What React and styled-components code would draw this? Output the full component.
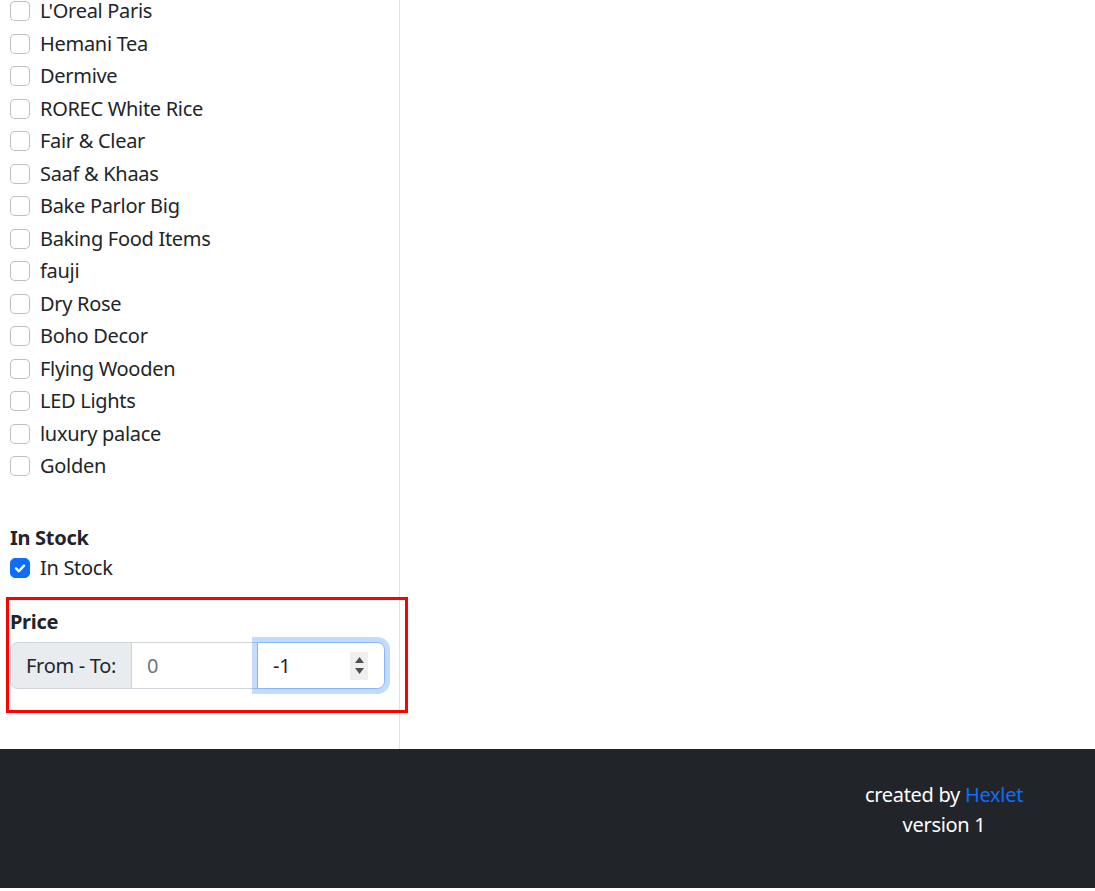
import React from "react";
import styled, { createGlobalStyle } from "styled-components";

const Global = createGlobalStyle`
  *, *::before, *::after { box-sizing: border-box; }
  html, body { margin: 0; padding: 0; background: #fff; }
  body {
    font-family: "Noto Sans", "Open Sans", sans-serif;
    font-size: 20px;
    line-height: 1.5;
    letter-spacing: -0.3px;
    color: #212529;
  }
`;

const Page = styled.div`
  display: flex;
  flex-direction: column;
  min-height: 888px;
  overflow: hidden;
`;

const Main = styled.div`
  display: flex;
  height: 749px;
`;

const Sidebar = styled.aside`
  width: 400px;
  border-right: 1px solid #dee2e6;
  padding: 0 14px 0 10px;
`;

const List = styled.div`
  margin-top: -4px;
`;

const Check = styled.label`
  display: block;
  position: relative;
  padding-left: 30px;
  min-height: 30px;
  margin-bottom: 2.5px;
  line-height: 30px;
`;

const Box = styled.span`
  position: absolute;
  left: 0;
  top: 5px;
  width: 20px;
  height: 20px;
  border-radius: 5px;
  border: 1px solid ${(p) => (p.$checked ? "#0d6efd" : "rgba(0,0,0,0.25)")};
  background: ${(p) => (p.$checked ? "#0d6efd" : "#fff")};
  display: flex;
  align-items: center;
  justify-content: center;
`;

const Heading = styled.div`
  font-weight: 700;
  line-height: 30px;
  margin-top: ${(p) => p.$mt || 0}px;
`;

const PriceSection = styled.section`
  position: relative;
  margin-top: 24px;
`;

const Highlight = styled.div`
  position: absolute;
  top: -10px;
  left: -4px;
  right: -23px;
  bottom: -24px;
  border: 3px solid #ff0000;
  pointer-events: none;
`;

const InputGroup = styled.div`
  display: flex;
  align-items: stretch;
  margin-top: 5px;
  width: 375px;
`;

const Addon = styled.span`
  display: flex;
  align-items: center;
  padding: 7.5px 15px;
  background: #e9ecef;
  border: 1px solid #ced4da;
  border-radius: 7.5px 0 0 7.5px;
  white-space: nowrap;
  color: #212529;
`;

const Field = styled.input`
  flex: 1 1 0;
  min-width: 0;
  font: inherit;
  letter-spacing: inherit;
  color: #212529;
  padding: 7.5px 15px;
  border: 1px solid #ced4da;
  margin-left: -1px;
  outline: none;
  background: #fff;
  &::placeholder { color: #6c757d; opacity: 1; }
`;

const FocusField = styled.div`
  flex: 1 1 0;
  min-width: 0;
  display: flex;
  align-items: center;
  margin-left: -1px;
  border: 1px solid #86b7fe;
  border-radius: 0 7.5px 7.5px 0;
  box-shadow: 0 0 0 5px rgba(13, 110, 253, 0.25);
  padding: 0 16px 0 15px;
  background: #fff;
  position: relative;
  z-index: 1;
`;

const InnerInput = styled.input`
  flex: 1;
  min-width: 0;
  font: inherit;
  letter-spacing: inherit;
  color: #212529;
  border: none;
  outline: none;
  padding: 7.5px 0;
  background: transparent;
`;

const Spinner = styled.span`
  display: flex;
  flex-direction: column;
  align-items: center;
  justify-content: space-around;
  width: 18px;
  height: 28px;
  background: #efefef;
  padding: 3px 0;
`;

const Footer = styled.footer`
  background: #212529;
  color: #fff;
  height: 139px;
  display: flex;
  justify-content: flex-end;
  padding-top: 31px;
`;

const FooterInner = styled.div`
  width: 302px;
  text-align: center;
  line-height: 30px;
`;

const Link = styled.a`
  color: #0d6efd;
  text-decoration: none;
`;

const brands = [
  "L'Oreal Paris",
  "Hemani Tea",
  "Dermive",
  "ROREC White Rice",
  "Fair & Clear",
  "Saaf & Khaas",
  "Bake Parlor Big",
  "Baking Food Items",
  "fauji",
  "Dry Rose",
  "Boho Decor",
  "Flying Wooden",
  "LED Lights",
  "luxury palace",
  "Golden",
];

const Tick = () => (
  <svg width="16" height="16" viewBox="0 0 20 20">
    <path d="M5 10.5l3.5 3.5 6.5-7" fill="none" stroke="#fff" strokeWidth="3" strokeLinecap="round" strokeLinejoin="round" />
  </svg>
);

const Arrow = ({ up }) => (
  <svg width="9" height="6" viewBox="0 0 9 6">
    <path d={up ? "M0 6 L4.5 0 L9 6 Z" : "M0 0 L4.5 6 L9 0 Z"} fill="#505050" />
  </svg>
);

export default function App() {
  return (
    <>
      <Global />
      <Page>
        <Main>
          <Sidebar>
            <List>
              {brands.map((b) => (
                <Check key={b}>
                  <Box />
                  {b}
                </Check>
              ))}
            </List>
            <Heading $mt={42}>In Stock</Heading>
            <Check>
              <Box $checked>
                <Tick />
              </Box>
              In Stock
            </Check>
            <PriceSection>
              <Highlight />
              <Heading>Price</Heading>
              <InputGroup>
                <Addon>From - To:</Addon>
                <Field type="text" placeholder="0" readOnly />
                <FocusField>
                  <InnerInput type="text" defaultValue="-1" />
                  <Spinner>
                    <Arrow up />
                    <Arrow />
                  </Spinner>
                </FocusField>
              </InputGroup>
            </PriceSection>
          </Sidebar>
        </Main>
        <Footer>
          <FooterInner>
            <div>
              created by <Link href="#">Hexlet</Link>
            </div>
            <div>version 1</div>
          </FooterInner>
        </Footer>
      </Page>
    </>
  );
}
